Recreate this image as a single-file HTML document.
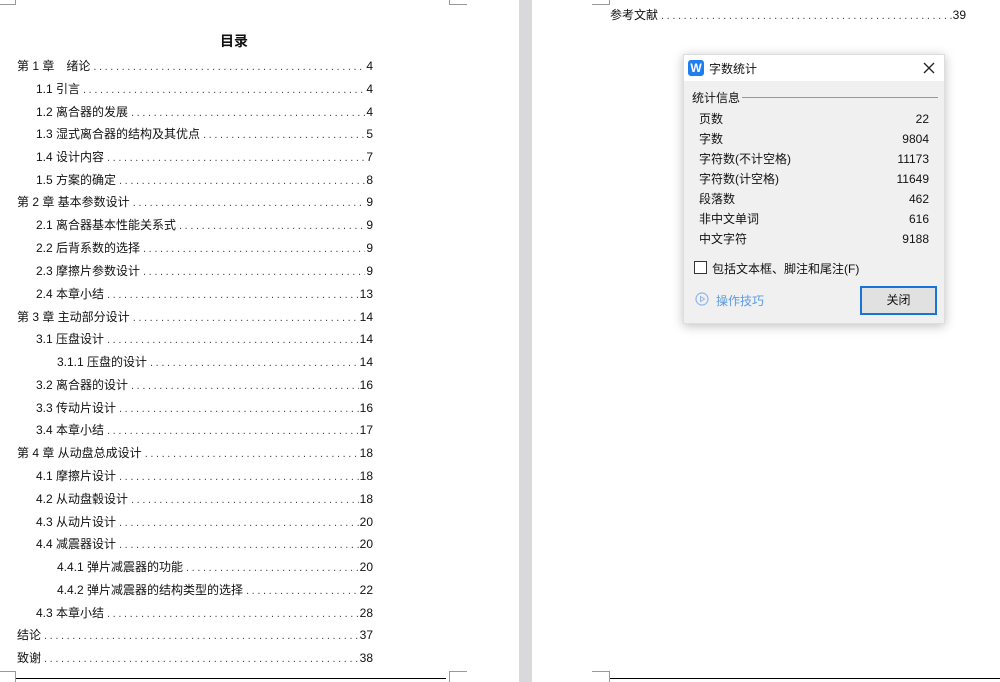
<!DOCTYPE html>
<html><head><meta charset="utf-8"><style>
*{margin:0;padding:0;box-sizing:border-box}
body{width:1000px;height:682px;position:relative;overflow:hidden;background:#fff;font-family:"Liberation Sans","Noto Sans CJK SC",sans-serif;color:#111}
.gap{position:absolute;left:519px;top:0;width:13px;height:682px;background:#d9d9dc}
.row{position:absolute;display:flex;align-items:baseline;font-size:12px;height:16px;line-height:16px;white-space:nowrap}
.row .t{padding-right:3px}
.row .d{flex:1;overflow:hidden;letter-spacing:2.6px;color:#444;font-size:11px}
.row .d::before{content:"..............................................................................................................................................................."}
.row .p{padding-left:1px}
.h{position:absolute;background:#999}
.dlg{position:absolute;left:683px;top:54px;width:262px;height:270px;background:#f0f0f0;border:1px solid #ddd;box-shadow:0 2px 10px rgba(0,0,0,.25);font-size:12px;color:#111}
.tb{height:26px;background:#fff;position:relative}
.it{position:absolute;height:16px;line-height:16px;display:flex;justify-content:space-between;align-items:center}
.it span{display:block;height:16px;line-height:16px}
</style></head><body>
<div class="gap"></div>
<div style="position:absolute;left:220px;top:31px;font-size:14px;font-weight:bold">目录</div>
<div class="h" style="left:449px;top:0;width:1px;height:5px"></div><div class="h" style="left:449px;top:4px;width:18px;height:1px"></div>
<div class="h" style="left:609px;top:0;width:1px;height:5px"></div><div class="h" style="left:592px;top:4px;width:18px;height:1px"></div>
<div class="h" style="left:15px;top:0;width:1px;height:5px"></div><div class="h" style="left:0;top:4px;width:16px;height:1px"></div>
<div class="h" style="left:15px;top:671px;width:1px;height:11px"></div><div class="h" style="left:0;top:671px;width:16px;height:1px"></div>
<div class="h" style="left:449px;top:671px;width:1px;height:11px"></div><div class="h" style="left:449px;top:671px;width:18px;height:1px"></div>
<div class="h" style="left:609px;top:671px;width:1px;height:11px"></div><div class="h" style="left:592px;top:671px;width:18px;height:1px"></div>
<div style="position:absolute;left:16px;top:678px;width:430px;height:1px;background:#000"></div>
<div style="position:absolute;left:610px;top:678px;width:390px;height:1px;background:#000"></div>

<div class="row" style="left:17px;top:58px;width:356px"><span class="t">第 1 章　绪论</span><span class="d"></span><span class="p">4</span></div>
<div class="row" style="left:36px;top:81px;width:337px"><span class="t">1.1 引言</span><span class="d"></span><span class="p">4</span></div>
<div class="row" style="left:36px;top:104px;width:337px"><span class="t">1.2 离合器的发展</span><span class="d"></span><span class="p">4</span></div>
<div class="row" style="left:36px;top:126px;width:337px"><span class="t">1.3 湿式离合器的结构及其优点</span><span class="d"></span><span class="p">5</span></div>
<div class="row" style="left:36px;top:149px;width:337px"><span class="t">1.4 设计内容</span><span class="d"></span><span class="p">7</span></div>
<div class="row" style="left:36px;top:172px;width:337px"><span class="t">1.5 方案的确定</span><span class="d"></span><span class="p">8</span></div>
<div class="row" style="left:17px;top:194px;width:356px"><span class="t">第 2 章 基本参数设计</span><span class="d"></span><span class="p">9</span></div>
<div class="row" style="left:36px;top:217px;width:337px"><span class="t">2.1 离合器基本性能关系式</span><span class="d"></span><span class="p">9</span></div>
<div class="row" style="left:36px;top:240px;width:337px"><span class="t">2.2 后背系数的选择</span><span class="d"></span><span class="p">9</span></div>
<div class="row" style="left:36px;top:263px;width:337px"><span class="t">2.3 摩擦片参数设计</span><span class="d"></span><span class="p">9</span></div>
<div class="row" style="left:36px;top:286px;width:337px"><span class="t">2.4 本章小结</span><span class="d"></span><span class="p">13</span></div>
<div class="row" style="left:17px;top:309px;width:356px"><span class="t">第 3 章 主动部分设计</span><span class="d"></span><span class="p">14</span></div>
<div class="row" style="left:36px;top:331px;width:337px"><span class="t">3.1 压盘设计</span><span class="d"></span><span class="p">14</span></div>
<div class="row" style="left:57px;top:354px;width:316px"><span class="t">3.1.1 压盘的设计</span><span class="d"></span><span class="p">14</span></div>
<div class="row" style="left:36px;top:377px;width:337px"><span class="t">3.2 离合器的设计</span><span class="d"></span><span class="p">16</span></div>
<div class="row" style="left:36px;top:400px;width:337px"><span class="t">3.3 传动片设计</span><span class="d"></span><span class="p">16</span></div>
<div class="row" style="left:36px;top:422px;width:337px"><span class="t">3.4 本章小结</span><span class="d"></span><span class="p">17</span></div>
<div class="row" style="left:17px;top:445px;width:356px"><span class="t">第 4 章 从动盘总成设计</span><span class="d"></span><span class="p">18</span></div>
<div class="row" style="left:36px;top:468px;width:337px"><span class="t">4.1 摩擦片设计</span><span class="d"></span><span class="p">18</span></div>
<div class="row" style="left:36px;top:491px;width:337px"><span class="t">4.2 从动盘毂设计</span><span class="d"></span><span class="p">18</span></div>
<div class="row" style="left:36px;top:514px;width:337px"><span class="t">4.3 从动片设计</span><span class="d"></span><span class="p">20</span></div>
<div class="row" style="left:36px;top:536px;width:337px"><span class="t">4.4 减震器设计</span><span class="d"></span><span class="p">20</span></div>
<div class="row" style="left:57px;top:559px;width:316px"><span class="t">4.4.1 弹片减震器的功能</span><span class="d"></span><span class="p">20</span></div>
<div class="row" style="left:57px;top:582px;width:316px"><span class="t">4.4.2 弹片减震器的结构类型的选择</span><span class="d"></span><span class="p">22</span></div>
<div class="row" style="left:36px;top:605px;width:337px"><span class="t">4.3 本章小结</span><span class="d"></span><span class="p">28</span></div>
<div class="row" style="left:17px;top:627px;width:356px"><span class="t">结论</span><span class="d"></span><span class="p">37</span></div>
<div class="row" style="left:17px;top:650px;width:356px"><span class="t">致谢</span><span class="d"></span><span class="p">38</span></div>
<div class="row" style="left:610px;top:7px;width:356px"><span class="t">参考文献</span><span class="d"></span><span class="p">39</span></div>

<div class="dlg">
 <div class="tb">
  <div style="position:absolute;left:4px;top:5px;width:16px;height:16px;background:#1e7ef0;border-radius:3px;color:#fff;font-weight:bold;font-size:12px;line-height:16px;text-align:center">W</div>
  <div style="position:absolute;left:25px;top:5px;font-size:12px">字数统计</div>
  <svg style="position:absolute;left:239px;top:7px" width="12" height="12"><path d="M1 1L11 11M11 1L1 11" stroke="#222" stroke-width="1.3"/></svg>
 </div>
 <div style="position:absolute;left:8px;top:34px">统计信息</div>
 <div style="position:absolute;left:58px;top:42px;width:196px;height:1px;background:#999"></div>
 <div class="it" style="top:56px;left:15px;width:230px"><span>页数</span><span>22</span></div>
 <div class="it" style="top:76px;left:15px;width:230px"><span>字数</span><span>9804</span></div>
 <div class="it" style="top:96px;left:15px;width:230px"><span>字符数(不计空格)</span><span>11173</span></div>
 <div class="it" style="top:116px;left:15px;width:230px"><span>字符数(计空格)</span><span>11649</span></div>
 <div class="it" style="top:136px;left:15px;width:230px"><span>段落数</span><span>462</span></div>
 <div class="it" style="top:156px;left:15px;width:230px"><span>非中文单词</span><span>616</span></div>
 <div class="it" style="top:176px;left:15px;width:230px"><span>中文字符</span><span>9188</span></div>
 <div style="position:absolute;left:10px;top:206px;width:13px;height:13px;border:1px solid #333;background:#fff"></div>
 <div style="position:absolute;left:28px;top:205px">包括文本框、脚注和尾注(F)</div>
 <svg style="position:absolute;left:11px;top:237px" width="14" height="14"><circle cx="7" cy="7" r="6" fill="none" stroke="#8fb6e6" stroke-width="1.2"/><path d="M5.5 4.5L9.5 7L5.5 9.5Z" fill="none" stroke="#8fb6e6"/></svg>
 <div style="position:absolute;left:32px;top:237px;color:#5b9be0">操作技巧</div>
 <div style="position:absolute;left:176px;top:231px;width:77px;height:29px;border:2px solid #1a73d9;background:#e1e1e1;text-align:center;line-height:25px">关闭</div>
</div>
</body></html>
